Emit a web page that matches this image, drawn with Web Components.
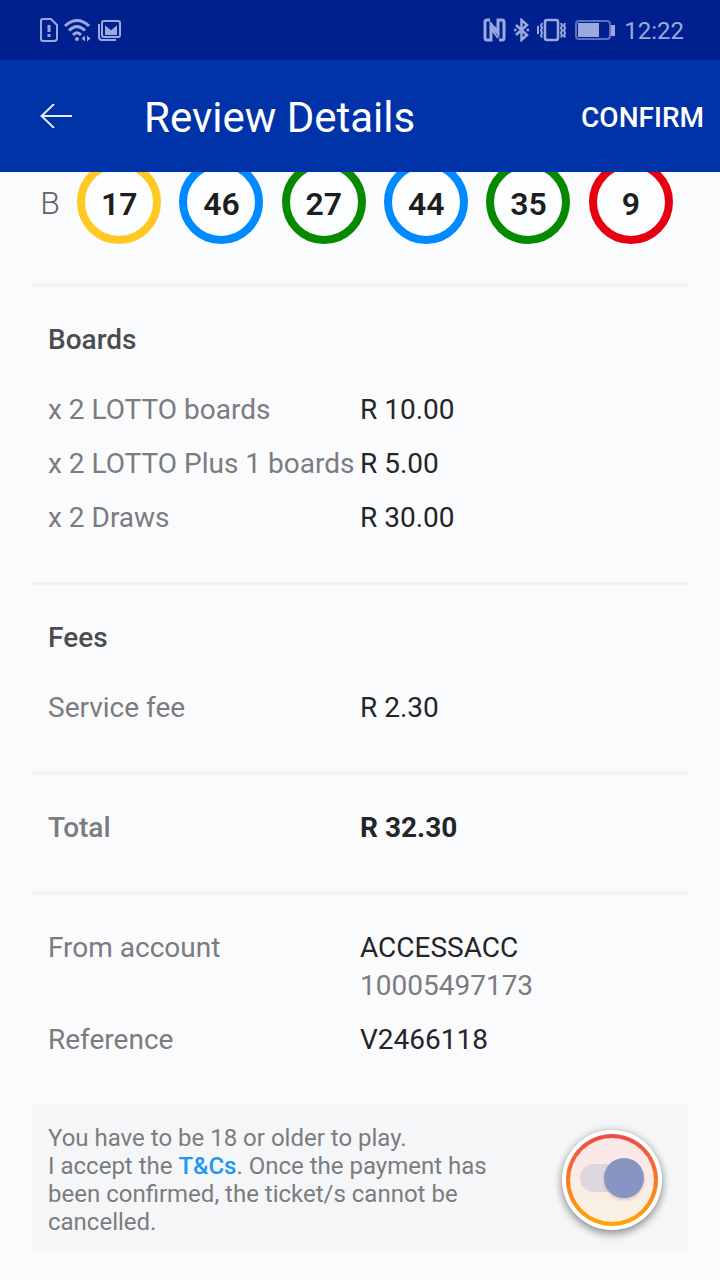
<!DOCTYPE html>
<html lang="en">
<head>
<meta charset="utf-8">
<meta name="viewport" content="width=device-width, initial-scale=1">
<title>Review Details</title>
<style>
  body { margin: 0; background: #fafbfd; color: #242528; font-family: Roboto, "Liberation Sans", sans-serif; font-size: 28px; }
</style>
</head>
<body>
<review-page></review-page>

<template id="status-bar">
  <style>
    :host { display: flex; align-items: center; justify-content: space-between; height: 60px; padding: 0 36px 0 40px; background: #00208f; color: #9ba9dc; font-size: 24px; line-height: 32px; }
    div { display: flex; align-items: center; }
    .left { gap: 6px; }
    .right { gap: 8px; }
    svg { display: block; fill: none; stroke: currentColor; stroke-width: 2; }
    time { padding-top: 2px; }
  </style>
  <div class="left">
    <svg width="18" height="24" viewBox="0 0 18 24" aria-hidden="true">
      <path d="M3 1h8l6 6v13a3 3 0 0 1-3 3H3a2 2 0 0 1-2-2V3a2 2 0 0 1 2-2z"/>
      <path d="M9 7v7M9 16v3" stroke-width="3"/>
    </svg>
    <svg width="27" height="24" viewBox="0 0 27 24" aria-hidden="true">
      <path d="M1 8Q13 -3 25 8M5 12.500Q13 4.500 21 12.500M9 17Q13 12.500 17 17" stroke-width="3"/>
      <circle cx="13" cy="21" r="2" fill="currentColor" stroke="none"/>
      <path d="M17.500 20.500l3.500-3v6zM26.500 20.500l-3.500-3v6z" fill="currentColor" stroke="none"/>
    </svg>
    <svg width="25" height="24" viewBox="0 0 25 24" aria-hidden="true">
      <path d="M2 6v13q0 3 3 3h14"/>
      <rect x="5" y="3" width="18" height="16" rx="2"/>
      <path d="M8 6l6 5 6-5v11H8z" fill="currentColor" stroke="none"/>
      <path d="M8 6l6 5 6-5" stroke="#00208f" stroke-width="2"/>
    </svg>
  </div>
  <div class="right">
    <svg width="23" height="24" viewBox="0 0 23 24" aria-hidden="true">
      <path d="M7 2H4Q2 2 2 4v16q0 2 2 2h4V9l4 6" stroke-width="3"/>
      <path d="M16 22h3q2 0 2-2V4q0-2-2-2h-4v13l-4-6" stroke-width="3"/>
      <path d="M7 4l9 12M7 9l8 11" stroke-width="2"/>
    </svg>
    <svg width="15" height="24" viewBox="0 0 15 24" aria-hidden="true">
      <path d="M2 7l11 10-5.500 5V2L13 7 2 17" stroke-width="2.500"/>
      <path d="M0 12h2.500M12.500 12H15" stroke-width="2.500"/>
    </svg>
    <svg width="29" height="24" viewBox="0 0 29 24" aria-hidden="true">
      <rect x="8" y="2" width="13" height="20" rx="2" stroke-width="2.600"/>
      <path d="M5 5L4 7.500l1 2.500-1 2.500 1 2.500-1 2.500 1 2M1 8v8M24 5l1 2.500-1 2.500 1 2.500-1 2.500 1 2.500-1 2M28 5l-1 2.500 1 2.500-1 2.500 1 2.500-1 2.500 1 2" stroke-width="2"/>
    </svg>
    <svg width="42" height="24" viewBox="0 0 42 24" aria-hidden="true">
      <rect x="2" y="3" width="34" height="18" rx="3" opacity=".6"/>
      <path d="M4 5h21v14H4z" fill="currentColor" stroke="none"/>
      <path d="M37 7h4v11h-4z" fill="currentColor" stroke="none"/>
    </svg>
    <time>12:22</time>
  </div>
</template>

<template id="app-bar">
  <style>
    :host { display: flex; align-items: center; height: 112px; padding: 0 16px 0 32px; background: #0033a7; color: #fff; }
    button { margin: 0; padding: 12px 0 8px; border: 0; background: none; color: inherit; font: 500 28px/32px Roboto, sans-serif; cursor: pointer; }
    .back { width: 112px; padding: 8px; }
    svg { display: block; fill: none; stroke: #e4e9f7; stroke-width: 2; }
    h1 { flex: 1; margin: 0; padding-top: 4px; font-size: 42px; line-height: 48px; font-weight: 400; }
  </style>
  <button class="back" type="button" aria-label="Back">
    <svg width="32" height="24" viewBox="0 0 32 24"><path d="M14 0L1.500 12 14 24M1 12h31"/></svg>
  </button>
  <h1><slot></slot></h1>
  <button type="button"><slot name="action"></slot></button>
</template>

<template id="lotto-board">
  <style>
    :host { display: flex; align-items: center; margin: -12px 38px 40px 32px; }
    .name { width: 36px; padding-top: 2px; text-align: center; color: #606164; font-size: 32px; line-height: 40px; font-weight: 300; }
    .balls { flex: 1; display: grid; grid-template-columns: repeat(6, 1fr); justify-items: center; }
  </style>
  <span class="name"></span>
  <div class="balls"><slot></slot></div>
</template>

<template id="lotto-ball">
  <style>
    :host { display: flex; align-items: center; justify-content: center; box-sizing: border-box; width: 84px; height: 84px; padding-top: 4px; border: 8px solid var(--ring); border-radius: 50%; background: #fcfdfe; color: #1d1e20; font-size: 32px; line-height: 40px; font-weight: 600; }
    :host([color="yellow"]) { --ring: #ffc825; }
    :host([color="blue"]) { --ring: #008aff; }
    :host([color="green"]) { --ring: #088a00; }
    :host([color="red"]) { --ring: #e60012; }
  </style>
  <slot></slot>
</template>

<template id="detail-section">
  <style>
    :host { display: block; margin: 0 32px; padding: 34px 16px 45px; border-top: 3px solid #f1f2f4; }
    h2 { margin: 0 0 32px; color: #4b4c4f; font-size: 28px; line-height: 38px; font-weight: 500; }
    .rows { display: grid; gap: 16px; }
  </style>
  <div class="rows"><slot></slot></div>
</template>

<template id="detail-row">
  <style>
    :host { display: grid; grid-template-columns: 1fr 1fr; line-height: 38px; }
    .label { color: #7b7c7f; white-space: nowrap; }
    :host([strong]) .label { font-weight: 500; }
    :host([strong]) .value { font-weight: 700; }
    ::slotted(small) { display: block; color: #7b7c7f; font-size: 28px; }
  </style>
  <span class="label"></span>
  <div class="value"><slot></slot></div>
</template>

<template id="terms-card">
  <style>
    :host { display: flex; align-items: center; gap: 32px; margin: 0 32px 27px; padding: 20px 26px 17px 16px; background: #f5f6f8; color: #7b7c7f; font-size: 24px; line-height: 28px; }
    p { flex: 1; margin: 0; }
    a { color: #1e96f5; font-weight: 500; text-decoration: none; }
  </style>
  <p id="terms">You have to be 18 or older to play.<br>I accept the <a href="#terms">T&amp;Cs</a>. Once the payment has been confirmed, the ticket/s cannot be cancelled.</p>
  <accept-switch></accept-switch>
</template>

<template id="accept-switch">
  <style>
    :host { display: block; flex: none; border-radius: 50%; background: #fff; padding: 4px; box-shadow: 0 4px 8px rgba(0,0,0,.36), 0 0 8px rgba(0,0,0,.16); }
    .ring { display: block; padding: 4px; border-radius: 50%; background: linear-gradient(#ea4c4c, #ffa800); }
    label { display: grid; place-items: center; box-sizing: border-box; width: 84px; height: 84px; padding-bottom: 4px; border-radius: 50%; background: linear-gradient(#fae7e8, #faf1e2); cursor: pointer; }
    input { appearance: none; display: flex; align-items: center; justify-content: flex-end; width: 64px; height: 28px; margin: 0; border-radius: 14px; background: #dcd8de; cursor: pointer; }
    input::before { content: ""; flex: none; width: 40px; height: 40px; border-radius: 50%; background: #8a94c2; box-shadow: 0 2px 3px rgba(0,0,0,.16); }
    input:not(:checked) { justify-content: flex-start; }
  </style>
  <div class="ring"><label><input type="checkbox" role="switch" aria-label="Accept terms and conditions" checked></label></div>
</template>

<template id="review-page">
  <style>
    :host { display: block; }
    main { overflow: hidden; }
  </style>
  <status-bar></status-bar>
  <app-bar>Review Details<span slot="action">CONFIRM</span></app-bar>
  <main>
    <lotto-board name="B">
      <lotto-ball color="yellow">17</lotto-ball>
      <lotto-ball color="blue">46</lotto-ball>
      <lotto-ball color="green">27</lotto-ball>
      <lotto-ball color="blue">44</lotto-ball>
      <lotto-ball color="green">35</lotto-ball>
      <lotto-ball color="red">9</lotto-ball>
    </lotto-board>
    <detail-section heading="Boards">
      <detail-row label="x 2 LOTTO boards">R 10.00</detail-row>
      <detail-row label="x 2 LOTTO Plus 1 boards">R 5.00</detail-row>
      <detail-row label="x 2 Draws">R 30.00</detail-row>
    </detail-section>
    <detail-section heading="Fees">
      <detail-row label="Service fee">R 2.30</detail-row>
    </detail-section>
    <detail-section>
      <detail-row label="Total" strong>R 32.30</detail-row>
    </detail-section>
    <detail-section>
      <detail-row label="From account">ACCESSACC<small>10005497173</small></detail-row>
      <detail-row label="Reference">V2466118</detail-row>
    </detail-section>
    <terms-card></terms-card>
  </main>
</template>

<script>
  class TemplateElement extends HTMLElement {
    constructor() {
      super();
      const template = document.getElementById(this.localName);
      this.attachShadow({ mode: "open" }).append(template.content.cloneNode(true));
    }
  }

  class StatusBar extends TemplateElement {}
  class AppBar extends TemplateElement {}
  class LottoBall extends TemplateElement {}
  class TermsCard extends TemplateElement {}
  class AcceptSwitch extends TemplateElement {}
  class ReviewPage extends TemplateElement {}

  class LottoBoard extends TemplateElement {
    connectedCallback() {
      this.shadowRoot.querySelector(".name").textContent = this.getAttribute("name");
    }
  }

  class DetailSection extends TemplateElement {
    connectedCallback() {
      const heading = this.getAttribute("heading");
      if (!heading || this.shadowRoot.querySelector("h2")) return;
      const title = document.createElement("h2");
      title.textContent = heading;
      this.shadowRoot.querySelector(".rows").before(title);
    }
  }

  class DetailRow extends TemplateElement {
    connectedCallback() {
      this.shadowRoot.querySelector(".label").textContent = this.getAttribute("label");
    }
  }

  customElements.define("status-bar", StatusBar);
  customElements.define("app-bar", AppBar);
  customElements.define("lotto-board", LottoBoard);
  customElements.define("lotto-ball", LottoBall);
  customElements.define("detail-section", DetailSection);
  customElements.define("detail-row", DetailRow);
  customElements.define("accept-switch", AcceptSwitch);
  customElements.define("terms-card", TermsCard);
  customElements.define("review-page", ReviewPage);
</script>
</body>
</html>
